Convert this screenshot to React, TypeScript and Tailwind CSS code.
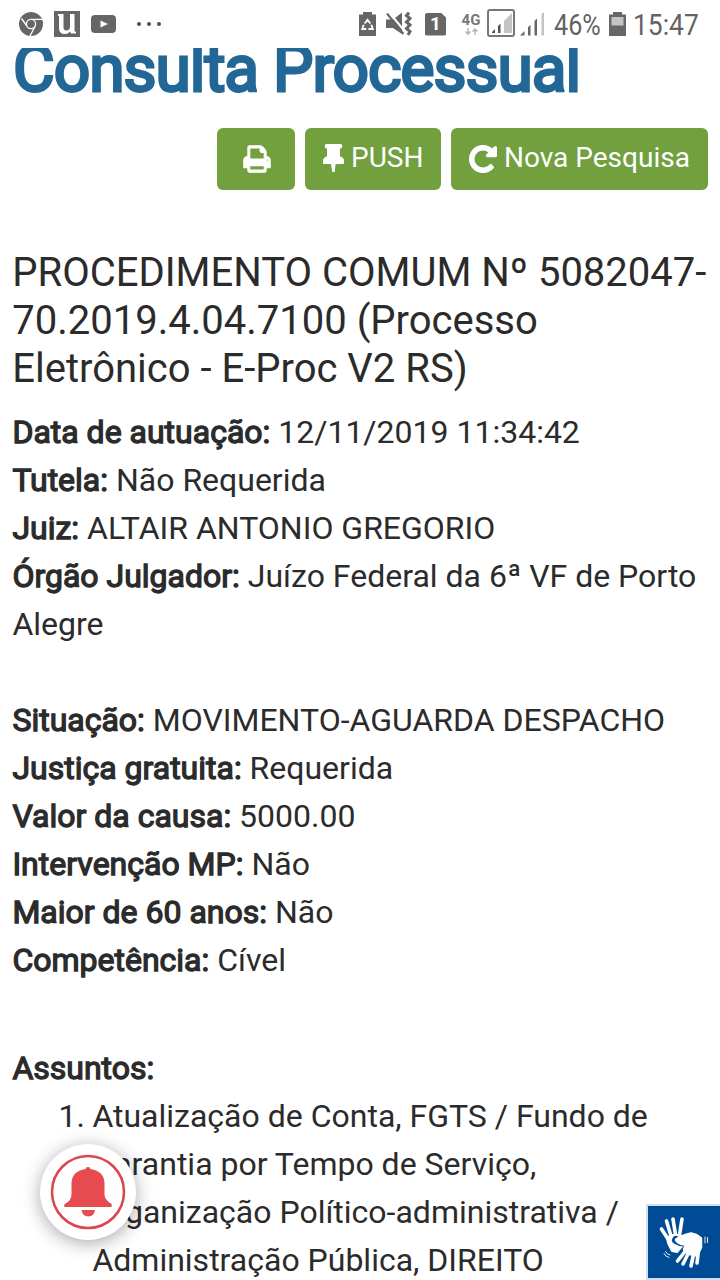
import React from 'react';

const statusFields = [
  { label: 'Data de autuação:', value: '12/11/2019 11:34:42' },
  { label: 'Tutela:', value: 'Não Requerida' },
  { label: 'Juiz:', value: 'ALTAIR ANTONIO GREGORIO' },
  { label: 'Órgão Julgador:', value: 'Juízo Federal da 6ª VF de Porto Alegre' },
];

const caseFields = [
  { label: 'Situação:', value: 'MOVIMENTO-AGUARDA DESPACHO' },
  { label: 'Justiça gratuita:', value: 'Requerida' },
  { label: 'Valor da causa:', value: '5000.00' },
  { label: 'Intervenção MP:', value: 'Não' },
  { label: 'Maior de 60 anos:', value: 'Não' },
  { label: 'Competência:', value: 'Cível' },
];

function StatusBar() {
  return (
    <header className="relative z-10 flex h-12 items-center bg-white text-[#636363]">
      {/* Notifications */}
      <svg className="ml-[19px] h-6 w-6" viewBox="0 0 24 24" fill="none" stroke="#fff" strokeWidth="1.3">
        <circle cx="12" cy="12" r="12" fill="#666" stroke="none" />
        <circle cx="12" cy="12" r="4.6" />
        <path d="M12 7.400h11M7.800 14L2.500 6.500M16 14.500L11 24" />
      </svg>
      <svg className="ml-[11px] h-[26px] w-[26px]" viewBox="0 0 26 26">
        <path d="M0 0h26v26H0z" fill="#666" />
        <path d="M4 3h5.500v13.500q0 3 3 3 3.500 0 3.500-4V3h4.500v17l1.500 1v1.500h-5l-1-2q-2 2.500-5 2.500-6 0-6-6V5H4z" fill="#fff" />
      </svg>
      <svg className="ml-[11px] h-[18px] w-[25px]" viewBox="0 0 25 18">
        <rect width="25" height="18" rx="4" fill="#666" />
        <path d="M9.500 5.500v7L17 9z" fill="#fff" />
      </svg>
      <div className="ml-[21px] flex gap-[6px]">
        <span className="h-1 w-1 rounded-full bg-[#505050]" />
        <span className="h-1 w-1 rounded-full bg-[#505050]" />
        <span className="h-1 w-1 rounded-full bg-[#505050]" />
      </div>

      {/* System icons */}
      <div className="ml-auto flex items-center pr-[21px]">
        <svg className="h-6 w-[17px]" viewBox="0 0 17 24" fill="#666">
          <path d="M0 2.500h4V0h9v2.500h4V24H0z" />
          <path d="M5.700 11.500l2.800-3.800 2.800 3.800M12.300 12.800l1.500 4.200H9.500M7.300 17H3.200l1.500-4.200" fill="none" stroke="#fff" strokeWidth="1.800" />
        </svg>
        <svg className="ml-[10px] h-6 w-[26px]" viewBox="0 0 26 24" fill="#666">
          <path d="M0 7.500h7l9-7v21.500l-9-6H0z" />
          <path d="M2 -1L18.500 19" stroke="#fff" strokeWidth="2" />
          <path d="M1 1.500L17.500 22" stroke="#666" strokeWidth="2" />
          <path d="M23 .5l-2.500 3 3.500 3-3.500 3.500 3.500 3-3.500 3.500 3.500 3-2 3.500" fill="none" stroke="#666" strokeWidth="3" />
        </svg>
        <div className="ml-[13px] flex h-[23px] w-[21px] items-center justify-center rounded-[2px] bg-[#666] text-[19px] leading-[22px] font-bold text-white [clip-path:polygon(0_0,75%_0,100%_22%,100%_100%,0_100%)]">
          1
        </div>
        <div className="ml-[15px] flex w-[20px] flex-col items-center">
          <span className="text-[15px] leading-[14px] font-bold text-[#777]">4G</span>
          <svg className="mt-px h-[7px] w-[13px]" viewBox="0 0 13 7" fill="none" stroke="#b5b5b5" strokeWidth="1.500">
            <path d="M3 0v6M.5 3.500L3 6l2.500-2.500M10 7V1M7.500 3.500L10 1l2.500 2.500" />
          </svg>
        </div>
        <svg className="ml-[6px] -mt-[2px] h-7 w-7" viewBox="0 0 28 28">
          <rect x="1" y="1" width="26" height="26" rx="2" fill="#fff" stroke="#777" strokeWidth="2" />
          <path d="M17 12l8-8v20h-8z" fill="#c4c4c4" />
          <path d="M5 24v-1l3-3v4zM11 17l2.500-2.500V24H11z" fill="#555" />
        </svg>
        <svg className="ml-[5px] h-6 w-6" viewBox="0 0 24 24">
          <path d="M0 23.500l4.500-4.500v4.500zM8 15l2.500-2v10.500H8zM14.500 9L17 6.500v17h-2.500z" fill="#666" />
          <path d="M21.500 2L24 0v23.500h-2.500z" fill="#c4c4c4" />
        </svg>
        <div className="ml-[10px] w-[55px] text-[30px] leading-[48px] whitespace-nowrap">
          <span className="inline-block origin-left translate-y-px scale-x-[0.84]">46%</span>
        </div>
        <svg className="h-6 w-[17px]" viewBox="0 0 17 24">
          <path d="M0 2.500h4V0h9v2.500h4V24H0z" fill="#666" />
          <path d="M2.500 5h12v8.500h-12z" fill="#c4c4c4" />
        </svg>
        <div className="ml-[7px] w-[66px] text-[30px] leading-[48px] whitespace-nowrap">
          <span className="inline-block origin-left translate-y-px scale-x-[0.88]">15:47</span>
        </div>
      </div>
    </header>
  );
}

function Fields({ items }: { items: { label: string; value: string }[] }) {
  return (
    <>
      {items.map((item) => (
        <p key={item.label}>
          <span className="[-webkit-text-stroke:1.3px_#2b2b2b]">{item.label}</span> {item.value}
        </p>
      ))}
    </>
  );
}

export default function App() {
  return (
    <div className="relative h-[1280px] w-[720px] overflow-hidden bg-white font-['Roboto',sans-serif] text-[#2b2b2b]">
      <StatusBar />
      <main>
        <h1 className="-mt-[14px] ml-[13px] h-[74px] text-[64px] leading-[72px] font-normal tracking-[-1px] whitespace-nowrap text-[#226796] [-webkit-text-stroke:2.8px_#226796]">
          Consulta Processual
        </h1>
        <div className="mt-5 mr-3 flex h-[62px] justify-end gap-[10px] text-[28px] text-white [text-shadow:0_-1px_0_rgba(0,0,0,0.25)]">
          <button className="flex w-[78px] items-center justify-center rounded-md bg-[#72a03f]">
            <svg className="ml-px h-7 w-7" viewBox="-45 83 1754 1626" preserveAspectRatio="none" fill="currentColor" stroke="currentColor" strokeWidth="60">
              <path d="M384 1536h896v-256H384v256zm0-640h896V512h-160q-40 0-68-28t-28-68V256H384v640zm1152 64q0-26-19-45t-45-19-45 19-19 45 19 45 45 19 45-19 19-45zm128 0v416q0 13-9.500 22.500t-22.500 9.500h-224v160q0 40-28 68t-68 28H352q-40 0-68-28t-28-68v-160H32q-13 0-22.500-9.500T0 1376V960q0-79 56.500-135.500T192 768h64V224q0-40 28-68t68-28h672q40 0 88 20t76 48l152 152q28 28 48 76t20 88v256h64q79 0 135.500 56.500T1664 960z" />
            </svg>
          </button>
          <button className="flex w-[136px] items-center rounded-md bg-[#72a03f] pl-[18px]">
            <svg className="-mt-[2px] h-7 w-[21px]" viewBox="0 128 1152 1664" preserveAspectRatio="none" fill="currentColor">
              <path d="M480 864V416q0-14-9-23t-23-9-23 9-9 23v448q0 14 9 23t23 9 23-9 9-23zm672 352q0 26-19 45t-45 19H659l-51 483q-2 12-10.500 20.500T577 1792h-1q-27 0-32-27l-76-485H64q-26 0-45-19t-19-45q0-123 78.500-221.500T256 896V384q-52 0-90-38t-38-90 38-90 90-38h640q52 0 90 38t38 90-38 90-90 38v512q99 0 177.500 98.500T1152 1216z" stroke="currentColor" strokeWidth="70" />
            </svg>
            <span className="-mt-[2px] ml-[7px]">PUSH</span>
          </button>
          <button className="flex w-[257px] items-center rounded-md bg-[#72a03f] pl-[18px] whitespace-nowrap">
            <svg className="h-7 w-7" viewBox="-30 98 1596 1596" fill="currentColor" stroke="currentColor" strokeWidth="60">
              <path d="M1536 256v448q0 26-19 45t-45 19h-448q-42 0-59-40-17-39 14-69l138-138Q969 384 768 384q-104 0-198.500 40.500T406 534 296.500 697.500 256 896t40.500 198.500T406 1258t163.500 109.500T768 1408q119 0 225-52t179-147q7-10 23-12 15 0 25 9l137 138q9 8 9.500 20.500t-7.500 22.500q-109 132-264 204.500T768 1664q-156 0-298-61t-245-164-164-245T0 896t61-298 164-245 245-164 298-61q147 0 284.500 55.500T1297 340l130-129q29-31 70-14 39 17 39 59z" />
            </svg>
            <span className="-mt-[2px] ml-[7px]">Nova Pesquisa</span>
          </button>
        </div>
        <h2 className="mt-[59px] ml-[12.3px] text-[40px] leading-[48px]">
          PROCEDIMENTO COMUM Nº 5082047-
          <br />
          70.2019.4.04.7100 (Processo
          <br />
          Eletrônico - E-Proc V2 RS)
        </h2>
        <div className="mt-[15px] ml-[12.4px] text-[32px] leading-[48px]">
          <Fields items={statusFields} />
          <div className="mt-12" />
          <Fields items={caseFields} />
          <p className="mt-[60px] [-webkit-text-stroke:1.3px_#2b2b2b]">Assuntos:</p>
          <div className="ml-[46px] flex whitespace-nowrap">
            <span className="w-[34px]">1.</span>
            <p>
              Atualização de Conta, FGTS / Fundo de
              <br />
              Garantia por Tempo de Serviço,
              <br />
              Organização Político-administrativa /
              <br />
              Administração Pública, DIREITO
            </p>
          </div>
        </div>
      </main>

      {/* Notification bell */}
      <button className="absolute top-[1144px] left-10 h-24 w-24 rounded-full bg-white shadow-[0_3px_18px_rgba(0,0,0,0.35)]">
        <svg className="h-24 w-24" viewBox="0 0 96 96" fill="#e64b4f">
          <circle cx="48" cy="48" r="36" fill="none" stroke="#d9484f" strokeWidth="2.600" />
          <path d="M45.500 25q0-2 2.500-2t2.500 2Q64 27 64.500 39v11q0 6 6.500 9.500 1.500 1 .5 3.500h-47q-1-2.500 1-3.500 6-3 6-9.500V39Q32 27 45.500 25zM41.500 66h13.500q-1 6.500-6.700 6.500T41.500 66z" />
        </svg>
      </button>

      {/* Sign language widget */}
      <button className="absolute top-[1204px] left-[646px] h-[76px] w-[76px] border-2 border-[#cfdff0] bg-[#004b95]">
        <svg className="h-[72px] w-[72px]" viewBox="0 0 72 72" fill="none" stroke="#fff" strokeLinecap="round" strokeLinejoin="round">
          <path d="M20 33l-6.500-10M23 30l-4.500-15M27.500 29L25 13M31.500 29L34 13" strokeWidth="3.600" />
          <path d="M19 32l4-3h9l3 2-6 3 1 4 5 1-6 7-5-1-4-8z" fill="#fff" strokeWidth="2" />
          <path d="M28 34q5 3 9 2.500" stroke="#004b95" strokeWidth="8" />
          <path d="M28 33.500q5-3.500 15-6 6 1 10 5v9l-4 8-10-2-3-4 2-5q-7 0-10-4.500z" fill="#fff" strokeWidth="2.500" />
          <path d="M39 43l-9.500 12M41 46l-6 12M46 46l-3 14M50.500 44L49 57" strokeWidth="3.600" />
          <path d="M57 31v6M59.500 31.500v5M17.500 45.500q1.500 3 4.500 3.500M16 47.500q1.500 3.500 5 4" strokeWidth=".9" />
        </svg>
      </button>
    </div>
  );
}
